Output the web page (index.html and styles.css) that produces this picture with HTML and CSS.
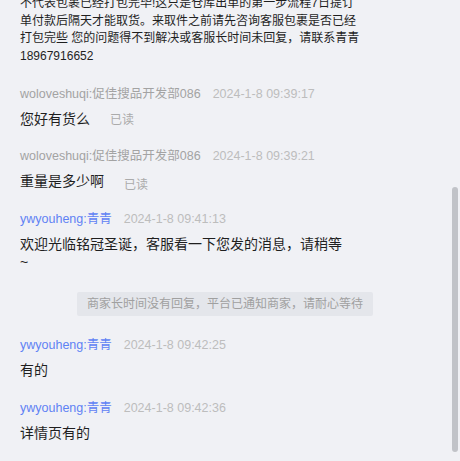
FILE: index.html
```html
<!DOCTYPE html>
<html lang="zh-CN">
<head>
<meta charset="utf-8">
<link rel="stylesheet" href="styles.css">
</head>
<body>
<div class="chat">
  <div class="list">
    <div class="msg first">
      <div class="meta"><span class="name">ywyouheng:青青</span><span class="time">2024-1-8 09:38:02</span></div>
      <div class="auto">不代表包裹已经打包完毕!这只是仓库出单的第一步流程7日提订单付款后隔天才能取货。来取件之前请先咨询客服包裹是否已经打包完些 您的问题得不到解决或客服长时间未回复，请联系青青18967916652</div>
    </div>
    <div class="msg">
      <div class="meta"><span class="name">woloveshuqi:促佳搜品开发部086</span><span class="time">2024-1-8 09:39:17</span></div>
      <div class="text">您好有货么<span class="read">已读</span></div>
    </div>
    <div class="msg">
      <div class="meta"><span class="name">woloveshuqi:促佳搜品开发部086</span><span class="time">2024-1-8 09:39:21</span></div>
      <div class="text">重量是多少啊<span class="read low">已读</span></div>
    </div>
    <div class="msg">
      <div class="meta"><span class="name staff">ywyouheng:青青</span><span class="time">2024-1-8 09:41:13</span></div>
      <div class="text">欢迎光临铭冠圣诞，客服看一下您发的消息，请稍等<br>~</div>
    </div>
    <div class="notice">商家长时间没有回复，平台已通知商家，请耐心等待</div>
    <div class="msg">
      <div class="meta"><span class="name staff">ywyouheng:青青</span><span class="time">2024-1-8 09:42:25</span></div>
      <div class="text">有的</div>
    </div>
    <div class="msg">
      <div class="meta"><span class="name staff">ywyouheng:青青</span><span class="time">2024-1-8 09:42:36</span></div>
      <div class="text">详情页有的</div>
    </div>
  </div>
  <div class="thumb"></div>
</div>
</body>
</html>
```
FILE: styles.css
```css
html, body {
  margin: 0;
  padding: 0;
  background: #f0f1f5;
}
body {
  font-family: "Liberation Sans", "Noto Sans CJK SC", sans-serif;
  color: #1f1f1f;
}
.chat {
  position: relative;
  width: 460px;
  height: 461px;
  overflow: hidden;
}
.list {
  display: flex;
  flex-direction: column;
  padding: 0 30px 0 20px;
  margin-top: -31px;
}
.msg {
  display: flex;
  flex-direction: column;
  margin-bottom: 18.5px;
}
.meta {
  height: 20px;
  line-height: 20px;
  font-size: 12.5px;
  white-space: nowrap;
}
.name {
  color: #a3a3a3;
}
.name.staff {
  color: #5f82f4;
}
.time {
  color: #bdbdbd;
  margin-left: 12px;
}
.auto {
  margin-top: 6px;
  font-size: 12px;
  line-height: 17.5px;
  max-width: 340px;
  color: #1f1f1f;
}
.text {
  margin-top: 6px;
  font-size: 14px;
  line-height: 18px;
}
.read {
  font-size: 12px;
  line-height: 1;
  color: #ababab;
  margin-left: 20px;
}
.read.low {
  position: relative;
  top: 3px;
}
.notice {
  align-self: center;
  margin: 3px 0 19px;
  height: 24px;
  line-height: 24px;
  padding: 0 10px;
  font-size: 12px;
  color: #a0a0a0;
  background: #e4e6eb;
  border-radius: 2px;
}
.thumb {
  position: absolute;
  left: 452px;
  top: 187px;
  width: 6px;
  height: 265px;
  border-radius: 3px;
  background: #c1c3c8;
}
```
